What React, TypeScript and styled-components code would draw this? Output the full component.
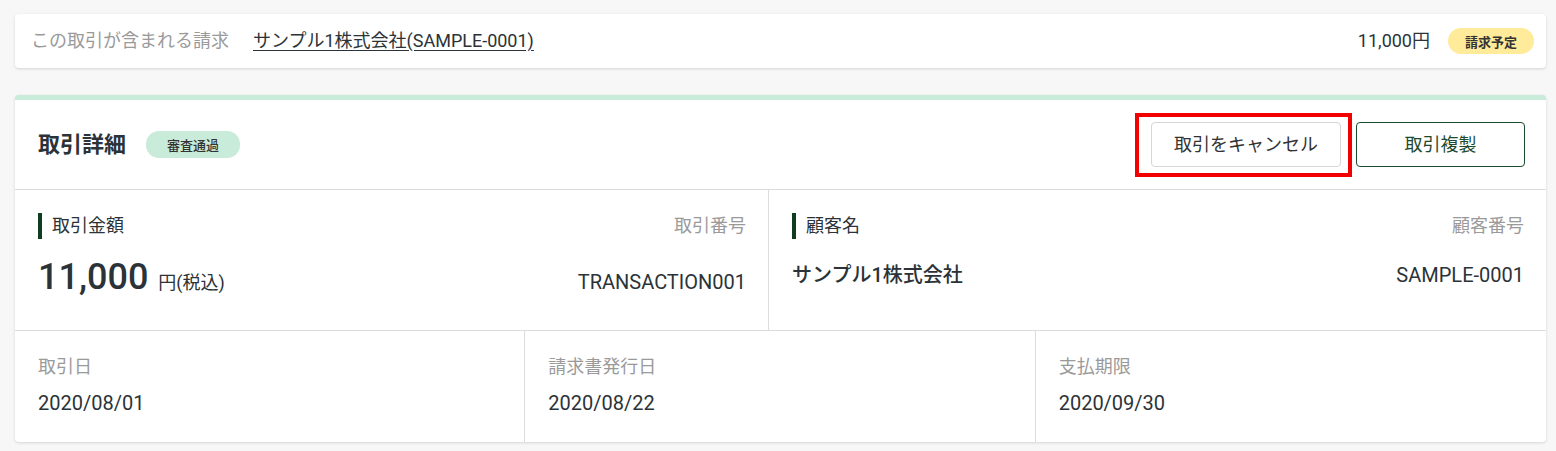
import React from "react";
import styled, { createGlobalStyle } from "styled-components";

const GlobalStyle = createGlobalStyle`
  html, body {
    margin: 0;
    padding: 0;
    background: #f7f7f7;
  }
  body {
    font-family: Roboto, "Noto Sans CJK JP", "Noto Sans", sans-serif;
    color: #2b3338;
    -webkit-font-smoothing: antialiased;
  }
  * { box-sizing: border-box; }
`;

const Page = styled.div`
  display: flex;
  flex-direction: column;
  gap: 27px;
  padding: 14px 10px 9px 15px;
`;

const InvoiceBar = styled.div`
  display: flex;
  align-items: center;
  height: 54px;
  padding: 0 12px 0 16px;
  background: #fff;
  border-radius: 4px;
  box-shadow: 0 1px 3px rgba(0, 0, 0, 0.14);
`;

const MutedText = styled.span`
  font-size: 18px;
  line-height: 26px;
  color: #9a9a9a;
`;

const InvoiceLink = styled.a`
  margin-left: 24px;
  font-size: 18px;
  line-height: 26px;
  color: #2b3338;
  text-decoration: underline;
  text-underline-offset: 3px;
`;

const Price = styled.span`
  margin-left: auto;
  font-size: 18px;
  line-height: 26px;
  color: #2b3338;
`;

const Badge = styled.span<{ $tone: "yellow" | "green"; $pad: number }>`
  display: inline-flex;
  align-items: center;
  height: 26px;
  padding: 0 ${(p) => p.$pad}px;
  border-radius: 13px;
  font-size: 13px;
  font-weight: ${(p) => (p.$tone === "yellow" ? 700 : 500)};
  color: #333;
  background: ${(p) => (p.$tone === "yellow" ? "#ffeb99" : "#c9ebd9")};
`;

const PriceBadge = styled(Badge)`
  margin-left: 18px;
`;

const DetailCard = styled.section`
  background: #fff;
  border-top: 5px solid #c9ebd9;
  border-radius: 4px;
  box-shadow: 0 1px 3px rgba(0, 0, 0, 0.14);
`;

const Header = styled.div`
  display: flex;
  align-items: center;
  height: 90px;
  padding: 0 21px 0 23px;
  border-bottom: 1px solid #dcdcdc;
`;

const Title = styled.h2`
  margin: 0;
  font-size: 22px;
  line-height: 30px;
  font-weight: 700;
  color: #2b3338;
`;

const StatusBadge = styled(Badge)`
  margin-left: 20px;
  height: 27px;
`;

const Actions = styled.div`
  display: flex;
  align-items: center;
  gap: 15px;
  margin-left: auto;
`;

const Highlight = styled.span`
  position: relative;
  display: inline-flex;
  &::after {
    content: "";
    position: absolute;
    top: -9px;
    left: -16px;
    right: -11px;
    bottom: -10px;
    border: 4px solid #f20000;
    pointer-events: none;
  }
`;

const Button = styled.button<{ $primary?: boolean }>`
  height: 45px;
  min-width: ${(p) => (p.$primary ? "169px" : "0")};
  padding: 0 22px;
  border-radius: 4px;
  border: 1px solid ${(p) => (p.$primary ? "#1d4a2d" : "#d6d6d6")};
  background: #fff;
  color: ${(p) => (p.$primary ? "#1d4a2d" : "#333")};
  font-family: inherit;
  font-size: 18px;
  line-height: 26px;
  cursor: pointer;
`;

const SummaryRow = styled.div`
  display: grid;
  grid-template-columns: 754fr 777fr;
  height: 141px;
  border-bottom: 1px solid #dcdcdc;
`;

const SummaryCell = styled.div<{ $last?: boolean }>`
  display: flex;
  flex-direction: column;
  padding: 23px 22px 0 23px;
  border-right: ${(p) => (p.$last ? "none" : "1px solid #dcdcdc")};
`;

const LabelRow = styled.div`
  display: flex;
  align-items: center;
  justify-content: space-between;
  height: 26px;
`;

const BarLabel = styled.span`
  display: flex;
  align-items: center;
  height: 26px;
  padding-left: 10px;
  border-left: 4px solid #0f3d20;
  font-size: 18px;
  line-height: 26px;
  color: #2b3338;
`;

const SideLabel = styled(MutedText)``;

const ValueRow = styled.div<{ $top: number }>`
  display: flex;
  align-items: baseline;
  justify-content: space-between;
  margin-top: ${(p) => p.$top}px;
`;

const Amount = styled.span`
  font-size: 36px;
  line-height: 40px;
  font-weight: 500;
  color: #2b3338;
`;

const Unit = styled.span`
  margin-left: 10px;
  font-size: 18px;
  font-weight: 400;
`;

const Value = styled.span<{ $weight?: number }>`
  font-size: 20px;
  line-height: 30px;
  font-weight: ${(p) => p.$weight ?? 400};
  color: #2b3338;
`;

const DateRow = styled.div`
  display: grid;
  grid-template-columns: repeat(3, 1fr);
  height: 111px;
`;

const DateCell = styled.div<{ $last?: boolean }>`
  display: flex;
  flex-direction: column;
  padding: 22px 23px 0;
  border-right: ${(p) => (p.$last ? "none" : "1px solid #dcdcdc")};
`;

const DateLabel = styled(MutedText)`
  line-height: 27px;
`;

const DateValue = styled(Value)`
  margin-top: 8px;
`;

const dates = [
  { label: "取引日", value: "2020/08/01" },
  { label: "請求書発行日", value: "2020/08/22" },
  { label: "支払期限", value: "2020/09/30" },
];

export default function App() {
  return (
    <>
      <GlobalStyle />
      <Page>
        <InvoiceBar>
          <MutedText>この取引が含まれる請求</MutedText>
          <InvoiceLink href="#">サンプル1株式会社(SAMPLE-0001)</InvoiceLink>
          <Price>11,000円</Price>
          <PriceBadge $tone="yellow" $pad={17}>
            請求予定
          </PriceBadge>
        </InvoiceBar>

        <DetailCard>
          <Header>
            <Title>取引詳細</Title>
            <StatusBadge $tone="green" $pad={21}>
              審査通過
            </StatusBadge>
            <Actions>
              <Highlight>
                <Button>取引をキャンセル</Button>
              </Highlight>
              <Button $primary>取引複製</Button>
            </Actions>
          </Header>

          <SummaryRow>
            <SummaryCell>
              <LabelRow>
                <BarLabel>取引金額</BarLabel>
                <SideLabel>取引番号</SideLabel>
              </LabelRow>
              <ValueRow $top={18}>
                <Amount>
                  11,000<Unit>円(税込)</Unit>
                </Amount>
                <Value>TRANSACTION001</Value>
              </ValueRow>
            </SummaryCell>
            <SummaryCell $last>
              <LabelRow>
                <BarLabel>顧客名</BarLabel>
                <SideLabel>顧客番号</SideLabel>
              </LabelRow>
              <ValueRow $top={21}>
                <Value $weight={500}>サンプル1株式会社</Value>
                <Value>SAMPLE-0001</Value>
              </ValueRow>
            </SummaryCell>
          </SummaryRow>

          <DateRow>
            {dates.map((d, i) => (
              <DateCell key={d.label} $last={i === dates.length - 1}>
                <DateLabel>{d.label}</DateLabel>
                <DateValue>{d.value}</DateValue>
              </DateCell>
            ))}
          </DateRow>
        </DetailCard>
      </Page>
    </>
  );
}
